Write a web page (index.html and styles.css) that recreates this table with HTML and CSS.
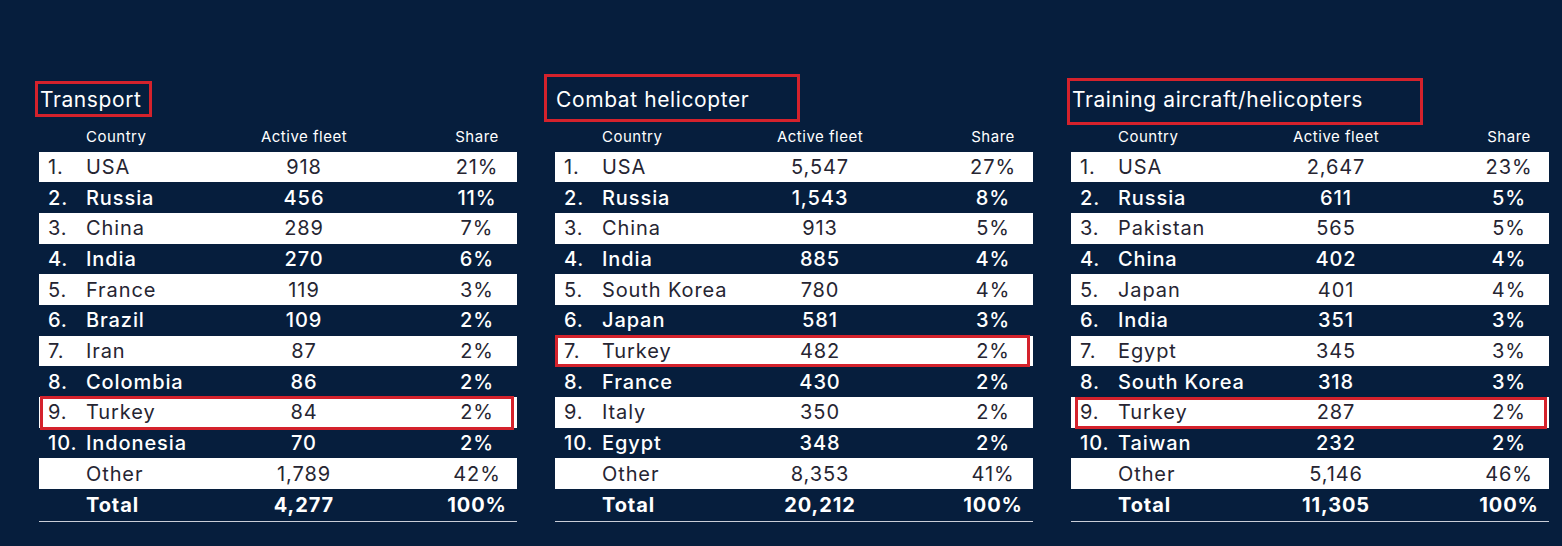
FILE: index.html
```html
<!DOCTYPE html>
<html lang="en">
<head>
<meta charset="utf-8">
<title>Active fleet by country</title>
<link rel="stylesheet" href="styles.css">
</head>
<body>
<main class="page">
  <section class="panel">
    <span class="title-mark mark-1"></span>
    <h2 class="title">Transport</h2>
    <div class="row head"><span></span><span class="c">Country</span><span class="f">Active fleet</span><span class="s">Share</span></div>
    <div class="row light"><span class="n">1.</span><span class="c">USA</span><span class="f">918</span><span class="s">21%</span></div>
    <div class="row dark"><span class="n">2.</span><span class="c">Russia</span><span class="f">456</span><span class="s">11%</span></div>
    <div class="row light"><span class="n">3.</span><span class="c">China</span><span class="f">289</span><span class="s">7%</span></div>
    <div class="row dark"><span class="n">4.</span><span class="c">India</span><span class="f">270</span><span class="s">6%</span></div>
    <div class="row light"><span class="n">5.</span><span class="c">France</span><span class="f">119</span><span class="s">3%</span></div>
    <div class="row dark"><span class="n">6.</span><span class="c">Brazil</span><span class="f">109</span><span class="s">2%</span></div>
    <div class="row light"><span class="n">7.</span><span class="c">Iran</span><span class="f">87</span><span class="s">2%</span></div>
    <div class="row dark"><span class="n">8.</span><span class="c">Colombia</span><span class="f">86</span><span class="s">2%</span></div>
    <div class="row light"><span class="row-mark rm-1"></span><span class="n">9.</span><span class="c">Turkey</span><span class="f">84</span><span class="s">2%</span></div>
    <div class="row dark"><span class="n">10.</span><span class="c">Indonesia</span><span class="f">70</span><span class="s">2%</span></div>
    <div class="row light"><span class="n"></span><span class="c">Other</span><span class="f">1,789</span><span class="s">42%</span></div>
    <div class="row total"><span class="n"></span><span class="c">Total</span><span class="f">4,277</span><span class="s">100%</span></div>
  </section>

  <section class="panel">
    <span class="title-mark mark-2"></span>
    <h2 class="title">Combat helicopter</h2>
    <div class="row head"><span></span><span class="c">Country</span><span class="f">Active fleet</span><span class="s">Share</span></div>
    <div class="row light"><span class="n">1.</span><span class="c">USA</span><span class="f">5,547</span><span class="s">27%</span></div>
    <div class="row dark"><span class="n">2.</span><span class="c">Russia</span><span class="f">1,543</span><span class="s">8%</span></div>
    <div class="row light"><span class="n">3.</span><span class="c">China</span><span class="f">913</span><span class="s">5%</span></div>
    <div class="row dark"><span class="n">4.</span><span class="c">India</span><span class="f">885</span><span class="s">4%</span></div>
    <div class="row light"><span class="n">5.</span><span class="c">South Korea</span><span class="f">780</span><span class="s">4%</span></div>
    <div class="row dark"><span class="n">6.</span><span class="c">Japan</span><span class="f">581</span><span class="s">3%</span></div>
    <div class="row light"><span class="row-mark rm-2"></span><span class="n">7.</span><span class="c">Turkey</span><span class="f">482</span><span class="s">2%</span></div>
    <div class="row dark"><span class="n">8.</span><span class="c">France</span><span class="f">430</span><span class="s">2%</span></div>
    <div class="row light"><span class="n">9.</span><span class="c">Italy</span><span class="f">350</span><span class="s">2%</span></div>
    <div class="row dark"><span class="n">10.</span><span class="c">Egypt</span><span class="f">348</span><span class="s">2%</span></div>
    <div class="row light"><span class="n"></span><span class="c">Other</span><span class="f">8,353</span><span class="s">41%</span></div>
    <div class="row total"><span class="n"></span><span class="c">Total</span><span class="f">20,212</span><span class="s">100%</span></div>
  </section>

  <section class="panel">
    <span class="title-mark mark-3"></span>
    <h2 class="title">Training aircraft/helicopters</h2>
    <div class="row head"><span></span><span class="c">Country</span><span class="f">Active fleet</span><span class="s">Share</span></div>
    <div class="row light"><span class="n">1.</span><span class="c">USA</span><span class="f">2,647</span><span class="s">23%</span></div>
    <div class="row dark"><span class="n">2.</span><span class="c">Russia</span><span class="f">611</span><span class="s">5%</span></div>
    <div class="row light"><span class="n">3.</span><span class="c">Pakistan</span><span class="f">565</span><span class="s">5%</span></div>
    <div class="row dark"><span class="n">4.</span><span class="c">China</span><span class="f">402</span><span class="s">4%</span></div>
    <div class="row light"><span class="n">5.</span><span class="c">Japan</span><span class="f">401</span><span class="s">4%</span></div>
    <div class="row dark"><span class="n">6.</span><span class="c">India</span><span class="f">351</span><span class="s">3%</span></div>
    <div class="row light"><span class="n">7.</span><span class="c">Egypt</span><span class="f">345</span><span class="s">3%</span></div>
    <div class="row dark"><span class="n">8.</span><span class="c">South Korea</span><span class="f">318</span><span class="s">3%</span></div>
    <div class="row light"><span class="row-mark rm-3"></span><span class="n">9.</span><span class="c">Turkey</span><span class="f">287</span><span class="s">2%</span></div>
    <div class="row dark"><span class="n">10.</span><span class="c">Taiwan</span><span class="f">232</span><span class="s">2%</span></div>
    <div class="row light"><span class="n"></span><span class="c">Other</span><span class="f">5,146</span><span class="s">46%</span></div>
    <div class="row total"><span class="n"></span><span class="c">Total</span><span class="f">11,305</span><span class="s">100%</span></div>
  </section>
</main>
</body>
</html>
```

FILE: styles.css
```css
html, body {
  margin: 0;
  padding: 0;
}
body {
  background: #061e3d;
  font-family: Inter, "Noto Sans", sans-serif;
  color: #ffffff;
  width: 1562px;
  height: 546px;
  overflow: hidden;
}
.page {
  display: flex;
  gap: 38px;
  padding-left: 39px;
}
.panel {
  position: relative;
  width: 478px;
  padding-top: 84px;
}
.title {
  margin: 0;
  height: 32px;
  line-height: 32px;
  font-size: 21px;
  font-weight: 400;
  padding-left: 1px;
  letter-spacing: 0.6px;
}
.title-mark {
  position: absolute;
  border: 3px solid #d4222c;
  box-sizing: border-box;
}
.mark-1 { left: -4px; top: 81px; width: 117px; height: 36px; }
.mark-2 { left: -11px; top: 74px; width: 256px; height: 48px; }
.mark-3 { left: -4px; top: 78px; width: 356px; height: 47px; }

.row {
  position: relative;
  display: grid;
  grid-template-columns: 47px 158px 120px 1fr;
  align-items: center;
  height: 30.7px;
  font-size: 20px;
  line-height: 24px;
  letter-spacing: 0.9px;
}
.row .n { padding-left: 9px; }
.row .f { text-align: center; }
.row .s { padding-left: 73px; text-align: center; }

.row.head {
  height: 35.5px;
  align-items: start;
  font-size: 15px;
  line-height: 20px;
  letter-spacing: 0.5px;
  padding-top: 11px;
  box-sizing: border-box;
}
.row.light {
  background: #ffffff;
  color: #262532;
  font-weight: 400;
}
.row.dark {
  color: #ffffff;
  font-weight: 450;
}
.row.total {
  font-weight: 700;
  color: #ffffff;
  border-bottom: 1px solid #c9ced8;
  height: 32px;
}
.row-mark {
  position: absolute;
  border: 3px solid #d4222c;
  box-sizing: border-box;
  pointer-events: none;
}
.rm-1 { left: 1px; top: -1px; width: 474px; height: 34px; }
.rm-2 { left: 0; top: -1px; width: 475px; height: 32px; }
.rm-3 { left: 4px; top: 0; width: 472px; height: 32px; }
```
